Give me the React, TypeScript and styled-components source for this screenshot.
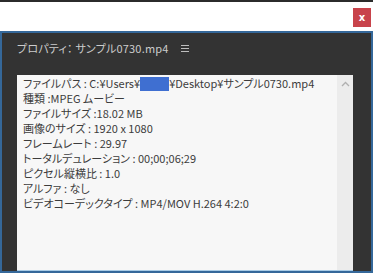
import React from "react";
import styled, { createGlobalStyle } from "styled-components";

const GlobalStyle = createGlobalStyle`
  html, body {
    margin: 0;
    padding: 0;
    background: #ffffff;
    overflow: hidden;
  }
  body {
    font-family: "Noto Sans CJK JP", "Noto Sans", sans-serif;
    font-feature-settings: "palt";
  }
`;

const Screen = styled.div`
  width: 373px;
  height: 273px;
  display: flex;
  flex-direction: column;
  border-top: 2px solid #2b2b2b;
  box-sizing: border-box;
`;

const TopBar = styled.div`
  height: 29px;
  display: flex;
  justify-content: flex-end;
  align-items: flex-start;
  padding: 6px 2px 0 0;
  box-sizing: border-box;
`;

const CloseButton = styled.div`
  width: 18px;
  height: 19px;
  background: #c8434b;
  color: #ffffff;
  font-family: "DejaVu Sans", sans-serif;
  font-size: 10px;
  font-weight: bold;
  display: flex;
  align-items: center;
  justify-content: center;
  line-height: 1;
`;

const Panel = styled.div`
  flex: 1;
  background: #333333;
  border: 2px solid #35689a;
  display: flex;
  flex-direction: column;
  min-height: 0;
`;

const Title = styled.div`
  height: 42px;
  display: flex;
  align-items: flex-start;
  padding: 7px 0 0 15px;
  box-sizing: border-box;
  color: #cccccc;
  font-size: 11px;
  letter-spacing: 0.2px;
  gap: 12px;
`;

const MenuIcon = styled.svg`
  margin-top: 5px;
`;

const ContentBox = styled.div`
  flex: 1;
  margin: 0 18px 0 15px;
  background: #f7f7f7;
  border-top-right-radius: 3px;
  border-bottom: 1px solid #a8cbe6;
  display: flex;
  min-height: 0;
`;

const Lines = styled.div`
  flex: 1;
  padding: 1px 0 0 6px;
  color: #3c3c3c;
  font-size: 11px;
  line-height: 15px;
`;

const Line = styled.div`
  white-space: nowrap;
`;

const Redacted = styled.span`
  display: inline-block;
  width: 29px;
  height: 14px;
  background: #3f6fd1;
  vertical-align: -3px;
`;

const Scrollbar = styled.div`
  width: 16px;
  background: #ececec;
  display: flex;
  justify-content: center;
  padding-top: 6px;
  box-sizing: border-box;
`;

const lines = [
  "種類 :MPEG ムービー",
  "ファイルサイズ :18.02 MB",
  "画像のサイズ : 1920 x 1080",
  "フレームレート : 29.97",
  "トータルデュレーション : 00;00;06;29",
  "ピクセル縦横比 : 1.0",
  "アルファ : なし",
  "ビデオコーデックタイプ : MP4/MOV H.264 4:2:0",
];

export default function App() {
  return (
    <>
      <GlobalStyle />
      <Screen>
        <TopBar>
          <CloseButton>x</CloseButton>
        </TopBar>
        <Panel>
          <Title>
            <span>プロパティ： サンプル0730.mp4</span>
            <MenuIcon width="8" height="7" viewBox="0 0 8 7">
              <path d="M0 0.5 H8 M0 3.5 H8 M0 6.5 H8" stroke="#bdbdbd" strokeWidth="1" />
            </MenuIcon>
          </Title>
          <ContentBox>
            <Lines>
              <Line>
                ファイルパス : C:¥Users¥<Redacted />¥Desktop¥サンプル0730.mp4
              </Line>
              {lines.map((l) => (
                <Line key={l}>{l}</Line>
              ))}
            </Lines>
            <Scrollbar>
              <svg width="9" height="6" viewBox="0 0 9 6">
                <path d="M1 5 L4.5 1.5 L8 5" fill="none" stroke="#b0b0b0" strokeWidth="1.3" />
              </svg>
            </Scrollbar>
          </ContentBox>
        </Panel>
      </Screen>
    </>
  );
}
